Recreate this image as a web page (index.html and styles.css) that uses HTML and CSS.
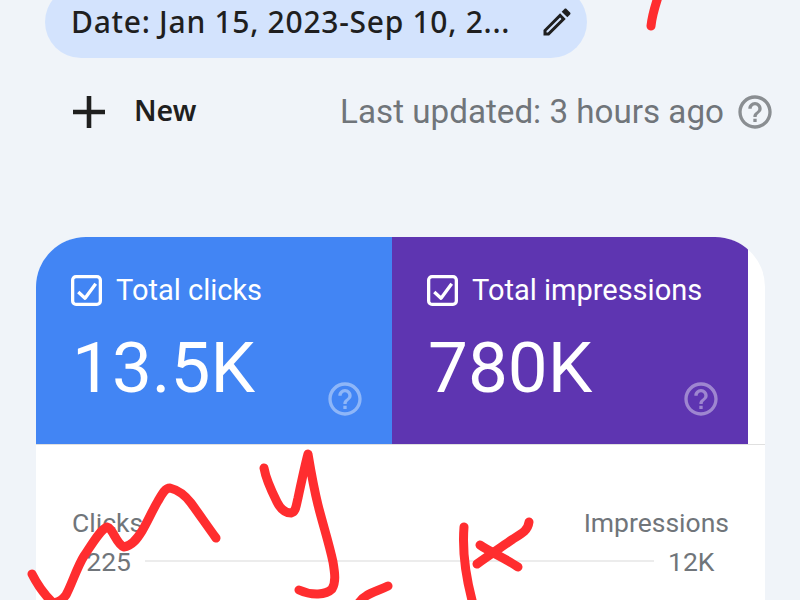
FILE: index.html
```html
<!DOCTYPE html>
<html lang="en">
<head>
<meta charset="utf-8">
<title>Performance</title>
<link rel="stylesheet" href="styles.css">
</head>
<body>
<div class="chip">
  <span class="chip-text">Date: Jan 15, 2023-Sep 10, 2...</span>
  <svg class="pencil" viewBox="0 0 24 24"><path d="M14.06 9.02l.92.92L5.92 19H5v-.92l9.06-9.06M17.66 3c-.25 0-.51.1-.7.29l-1.83 1.83 3.75 3.75 1.83-1.83c.39-.39.39-1.02 0-1.41l-2.34-2.34c-.2-.2-.45-.29-.71-.29zm-3.6 3.19L3 17.25V21h3.75L17.81 9.94l-3.75-3.75z"/></svg>
</div>
<div class="toolbar">
  <svg class="plus" viewBox="5 5 14 14"><path d="M19 13h-6v6h-2v-6H5v-2h6V5h2v6h6v2z"/></svg>
  <span class="new">New</span>
  <span class="updated">Last updated: 3 hours ago</span>
  <svg class="help help-grey" viewBox="0 0 24 24"><path d="M11 18h2v-2h-2v2zm1-16C6.48 2 2 6.48 2 12s4.48 10 10 10 10-4.48 10-10S17.52 2 12 2zm0 18c-4.41 0-8-3.59-8-8s3.59-8 8-8 8 3.59 8 8-3.59 8-8 8zm0-14c-2.21 0-4 1.79-4 4h2c0-1.1.9-2 2-2s2 .9 2 2c0 2-3 1.75-3 5h2c0-2.25 3-2.5 3-5 0-2.21-1.79-4-4-4z"/></svg>
</div>
<section class="card">
  <div class="tiles">
    <div class="tile tile-blue">
      <div class="tile-head">
        <svg class="check" viewBox="0 0 32 32"><rect x="1.7" y="1.7" width="28.6" height="28.6" rx="3.5"/><path d="M7.5 17.5l7 6.5 11-15"/></svg>
        <span class="tile-label">Total clicks</span>
      </div>
      <div class="tile-value">13.5K</div>
      <svg class="help help-tile" viewBox="0 0 24 24"><path d="M11 18h2v-2h-2v2zm1-16C6.48 2 2 6.48 2 12s4.48 10 10 10 10-4.48 10-10S17.52 2 12 2zm0 18c-4.41 0-8-3.59-8-8s3.59-8 8-8 8 3.59 8 8-3.59 8-8 8zm0-14c-2.21 0-4 1.79-4 4h2c0-1.1.9-2 2-2s2 .9 2 2c0 2-3 1.75-3 5h2c0-2.25 3-2.5 3-5 0-2.21-1.79-4-4-4z"/></svg>
    </div>
    <div class="tile tile-purple">
      <div class="tile-head">
        <svg class="check" viewBox="0 0 32 32"><rect x="1.7" y="1.7" width="28.6" height="28.6" rx="3.5"/><path d="M7.5 17.5l7 6.5 11-15"/></svg>
        <span class="tile-label">Total impressions</span>
      </div>
      <div class="tile-value">780K</div>
      <svg class="help help-tile" viewBox="0 0 24 24"><path d="M11 18h2v-2h-2v2zm1-16C6.48 2 2 6.48 2 12s4.48 10 10 10 10-4.48 10-10S17.52 2 12 2zm0 18c-4.41 0-8-3.59-8-8s3.59-8 8-8 8 3.59 8 8-3.59 8-8 8zm0-14c-2.21 0-4 1.79-4 4h2c0-1.1.9-2 2-2s2 .9 2 2c0 2-3 1.75-3 5h2c0-2.25 3-2.5 3-5 0-2.21-1.79-4-4-4z"/></svg>
    </div>
  </div>
  <div class="chart">
    <div class="axis-titles"><span>Clicks</span><span>Impressions</span></div>
    <div class="axis-row">
      <span class="tick tick-left">225</span>
      <span class="gridline"></span>
      <span class="tick tick-right">12K</span>
    </div>
  </div>
</section>
<svg class="scribble" viewBox="0 0 800 600">
  <path d="M659 -6C655 6 652 15 651 26"/>
  <path d="M32 574C38 586 44 594 52 602C58 604 62 600 66 595C72 584 77 567 84 556C92 544 100 530 107 527C113 528 116 544 124 547C132 546 137 539 142 531C148 521 152 511 158 501C162 494 165 488 170 488C178 490 185 495 191 503C199 514 208 527 216 538"/>
  <path d="M264 468C266 480 272 492 277 502C281 510 286 513 291 513C296 512 296 506 298 498C301 484 305 465 308 454C311 472 314 489 318 505C323 525 329 543 333 562C335 574 336 582 332 589C326 595 312 596 299 590"/>
  <path d="M388 586C380 590 372 592 366 596C362 598 359 602 357 606"/>
  <path d="M464 527C462 552 466 578 473 604"/>
  <path d="M529 522C528 530 523 533 513 539C500 548 488 556 477 564"/>
  <path d="M480 545C490 552 505 558 518 567"/>
</svg>
</body>
</html>
```
FILE: styles.css
```css
* { box-sizing: border-box; }
html, body { margin: 0; height: 600px; overflow: hidden; }
body {
  position: relative;
  background: #f0f4f9;
  font-family: Roboto, "Liberation Sans", sans-serif;
  color: #1f1f1f;
}
.chip {
  display: flex;
  align-items: center;
  justify-content: space-between;
  width: 542px;
  height: 72px;
  margin: -14px 0 0 45px;
  padding: 0 12px 0 26px;
  background: #d3e3fd;
  border-radius: 36px;
}
.chip-text { margin-bottom: 2px; font-family: "Noto Sans", Roboto, sans-serif; font-size: 30px; font-weight: 500; letter-spacing: 0.72px; white-space: nowrap; }
.pencil { width: 36px; height: 36px; fill: #1f1f1f; flex: none; }
.toolbar {
  display: flex;
  align-items: center;
  height: 64px;
  margin-top: 22px;
  padding: 0 25px 0 73px;
}
.plus { width: 32px; height: 32px; fill: #1f1f1f; flex: none; }
.new { margin-left: 29px; margin-bottom: 4px; font-family: "Noto Sans", Roboto, sans-serif; font-size: 28.5px; font-weight: 600; }
.updated { margin-left: auto; margin-right: 11px; margin-bottom: 2px; font-size: 33.2px; color: #70757a; white-space: nowrap; }
.help { width: 40px; height: 40px; flex: none; }
.help-grey { fill: #8a8e92; }
.card {
  width: 729px;
  height: 500px;
  margin: 93px 0 0 36px;
  background: #fff;
  border-radius: 50px;
  overflow: hidden;
}
.tiles { display: flex; height: 208px; border-bottom: 1px solid #e0e0e0; }
.tile {
  position: relative;
  width: 356px;
  padding: 38px 36px 0 35px;
  color: #fff;
}
.tile-blue { background: #4285f4; }
.tile-purple { background: #5e35b1; }
.tile-head { display: flex; align-items: flex-start; gap: 14px; }
.check { width: 31px; height: 31px; flex: none; fill: none; stroke: #fff; stroke-width: 3.4; stroke-linejoin: round; }
.tile-label { font-size: 29px; line-height: 30px; white-space: nowrap; }
.tile-value { margin-top: 20px; padding-left: 1px; font-size: 71px; line-height: 84px; }
.help-tile { position: absolute; right: 27px; bottom: 25px; fill: #fff; opacity: 0.4; }
.chart { padding: 63px 36px 0; color: #70757a; font-size: 26.5px; }
.axis-titles { display: flex; justify-content: space-between; line-height: 30px; }
.axis-row { display: flex; align-items: center; margin-top: 9px; height: 28px; }
.tick { flex: none; white-space: nowrap; }
.tick-left { width: 59px; text-align: right; }
.gridline { flex: none; width: 509px; height: 2px; margin-left: 14px; background: #ececec; }
.tick-right { margin-left: 14px; }
.scribble {
  position: absolute;
  left: 0;
  top: 0;
  width: 800px;
  height: 600px;
  fill: none;
  stroke: #ff2d2f;
  stroke-width: 9;
  stroke-linecap: round;
  stroke-linejoin: round;
}
```
